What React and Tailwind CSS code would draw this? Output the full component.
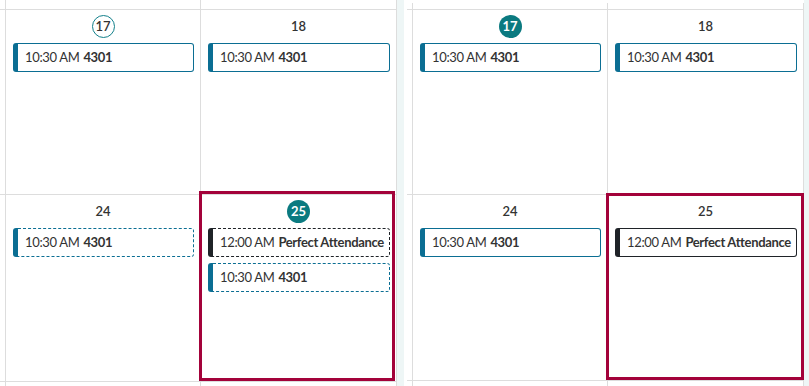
const BLUE = "blue";
const BLACK = "black";

const font = { fontFamily: "Lato, 'Open Sans', sans-serif" };

function DayNumber({ n, variant }) {
  if (variant === "outline") {
    return (
      <div className="flex h-[23px] w-[23px] items-center justify-center rounded-full border-[1.5px] border-[#12808a] text-[13px] font-semibold text-[#333]">
        {n}
      </div>
    );
  }
  if (variant === "filled") {
    return (
      <div className="flex h-[23px] w-[23px] items-center justify-center rounded-full bg-[#0b7a80] text-[13px] font-bold text-white">
        {n}
      </div>
    );
  }
  return (
    <div className="flex h-[23px] items-center justify-center text-[13px] font-semibold text-[#333]">
      {n}
    </div>
  );
}

function EventPill({ time, title, color, dashed }) {
  const bar = color === BLUE ? "bg-[#0b6e93]" : "bg-[#1f2328]";
  const line = color === BLUE ? "border-[#0b6e93]" : "border-[#1f2328]";
  return (
    <div className="flex h-[29px]">
      <div className={`w-[5px] rounded-l-[3px] ${bar}`} />
      <div
        className={`flex flex-1 items-center overflow-hidden whitespace-nowrap rounded-r-[3px] border border-l-0 pl-[7px] text-[13px] tracking-[-0.35px] text-[#333] ${line} ${
          dashed ? "border-dashed" : "border-solid"
        }`}
      >
        <span>{time}</span>
        <span className="ml-[4px] font-bold">{title}</span>
      </div>
    </div>
  );
}

function DayCell({ day, variant, events = [], selected, selectedBox, last }) {
  return (
    <div
      className={`relative flex flex-col items-center border-l border-[#dddddd] pt-[5px] ${
        last ? "border-r" : ""
      }`}
    >
      <DayNumber n={day} variant={variant} />
      <div className="mt-[5px] flex w-full flex-col gap-[6px] pl-[7px] pr-[6px]">
        {events.map((e, i) => (
          <EventPill key={i} {...e} />
        ))}
      </div>
      {selected && (
        <div className={`pointer-events-none absolute border-[3px] border-[#a3023a] ${selectedBox}`} />
      )}
    </div>
  );
}

function Panel({ rows, inset, topGap }) {
  const cols = "grid grid-cols-[5px_195px_197px]";
  return (
    <div className={`flex h-full flex-col bg-white ${inset}`}>
      <div className={`h-[9px] ${topGap}`}>
        <div className={`${cols} h-full`}>
          <div />
          <div className="border-l border-[#dddddd]" />
          <div className="border-x border-[#dddddd]" />
        </div>
      </div>
      {rows.map((r, i) => (
        <div key={i} className={`${cols} border-t border-[#dddddd] ${r.height}`}>
          <div />
          <DayCell {...r.cells[0]} />
          <DayCell {...r.cells[1]} last />
        </div>
      ))}
      <div className={`${cols} flex-1 border-t border-[#dddddd]`}>
        <div />
        <div className="border-l border-[#dddddd]" />
        <div className="border-x border-[#dddddd]" />
      </div>
    </div>
  );
}

const standup = { time: "10:30 AM", title: "4301", color: BLUE };
const award = { time: "12:00 AM", title: "Perfect Attendance", color: BLACK };

export default function App() {
  const leftRows = [
    {
      height: "h-[185px]",
      cells: [
        { day: 17, variant: "outline", events: [standup] },
        { day: 18, events: [standup] },
      ],
    },
    {
      height: "h-[187px]",
      cells: [
        { day: 24, events: [{ ...standup, dashed: true }] },
        {
          day: 25,
          variant: "filled",
          events: [{ ...award, dashed: true }, { ...standup, dashed: true }],
          selected: true,
          selectedBox: "-left-[2px] -top-[4px] right-[1px] bottom-0",
        },
      ],
    },
  ];

  const rightRows = [
    {
      height: "h-[185px]",
      cells: [
        { day: 17, variant: "filled", events: [standup] },
        { day: 18, events: [standup] },
      ],
    },
    {
      height: "h-[186px]",
      cells: [
        { day: 24, events: [standup] },
        {
          day: 25,
          events: [award],
          selected: true,
          selectedBox: "-left-[2px] -top-[2px] -right-[1px] bottom-0",
        },
      ],
    },
  ];

  return (
    <div className="flex h-[386px] w-[809px] overflow-hidden bg-[#eef6f6]" style={font}>
      <div className="w-[397px] shrink-0">
        <Panel rows={leftRows} inset="" topGap="h-[8px]" />
      </div>
      <div className="ml-[7px] w-[400px] shrink-0">
        <Panel rows={rightRows} inset="pl-[3px]" topGap="pt-[3px]" />
      </div>
    </div>
  );
}
